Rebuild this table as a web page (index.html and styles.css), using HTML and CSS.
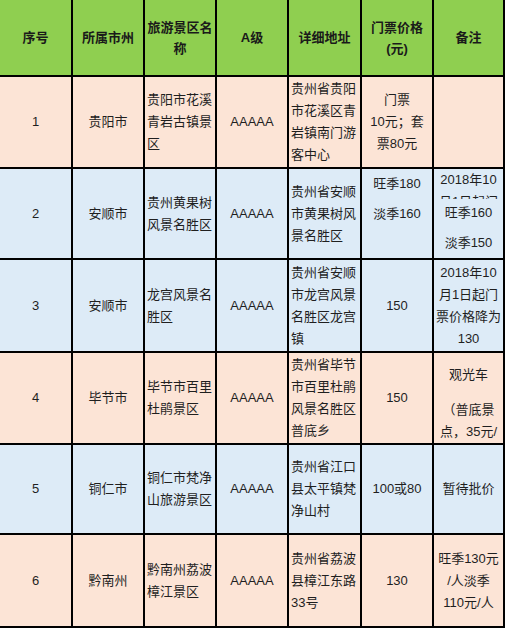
FILE: index.html
```html
<!DOCTYPE html>
<html lang="zh-CN">
<head>
<meta charset="utf-8">
<title>贵州5A景区门票</title>
<link rel="stylesheet" href="styles.css">
</head>
<body>
<div class="table">
  <div class="c h">序号</div>
  <div class="c h">所属市州</div>
  <div class="c h">旅游景区名<br>称</div>
  <div class="c h">A级</div>
  <div class="c h">详细地址</div>
  <div class="c h">门票价格<br>(元)</div>
  <div class="c h">备注</div>

  <div class="c p">1</div>
  <div class="c p">贵阳市</div>
  <div class="c p l">贵阳市花溪<br>青岩古镇景<br>区</div>
  <div class="c p">AAAAA</div>
  <div class="c p l">贵州省贵阳<br>市花溪区青<br>岩镇南门游<br>客中心</div>
  <div class="c p">门票<br>10元；套<br>票80元</div>
  <div class="c p"></div>

  <div class="c b">2</div>
  <div class="c b">安顺市</div>
  <div class="c b l">贵州黄果树<br>风景名胜区</div>
  <div class="c b">AAAAA</div>
  <div class="c b l">贵州省安顺<br>市黄果树风<br>景名胜区</div>
  <div class="c b top">
    <div class="stack price2">
      <div class="para">旺季180</div>
      <div class="para">淡季160</div>
    </div>
  </div>
  <div class="c b top">
    <div class="stack note2">
      <div class="line">2018年10</div>
      <div class="clip">月1日起门</div>
      <div class="line after-clip">旺季160</div>
      <div class="line gap">淡季150</div>
    </div>
  </div>

  <div class="c b">3</div>
  <div class="c b">安顺市</div>
  <div class="c b l">龙宫风景名<br>胜区</div>
  <div class="c b">AAAAA</div>
  <div class="c b l">贵州省安顺<br>市龙宫风景<br>名胜区龙宫<br>镇</div>
  <div class="c b">150</div>
  <div class="c b">2018年10<br>月1日起门<br>票价格降为<br>130</div>

  <div class="c p">4</div>
  <div class="c p">毕节市</div>
  <div class="c p l">毕节市百里<br>杜鹃景区</div>
  <div class="c p">AAAAA</div>
  <div class="c p l">贵州省毕节<br>市百里杜鹃<br>风景名胜区<br>普底乡</div>
  <div class="c p">150</div>
  <div class="c p top">
    <div class="stack note4">
      <div class="line">观光车</div>
      <div class="line gap2">（普底景<br>点，35元/</div>
    </div>
  </div>

  <div class="c b">5</div>
  <div class="c b">铜仁市</div>
  <div class="c b l">铜仁市梵净<br>山旅游景区</div>
  <div class="c b">AAAAA</div>
  <div class="c b l">贵州省江口<br>县太平镇梵<br>净山村</div>
  <div class="c b">100或80</div>
  <div class="c b">暂待批价</div>

  <div class="c p">6</div>
  <div class="c p">黔南州</div>
  <div class="c p l">黔南州荔波<br>樟江景区</div>
  <div class="c p">AAAAA</div>
  <div class="c p l">贵州省荔波<br>县樟江东路<br>33号</div>
  <div class="c p">130</div>
  <div class="c p">旺季130元<br>/人淡季<br>110元/人</div>
</div>
</body>
</html>
```
FILE: styles.css
```css
html, body {
  margin: 0;
  padding: 0;
  background: #ffffff;
}

.table {
  width: 505px;
  height: 628px;
  box-sizing: border-box;
  display: grid;
  grid-template-columns: 71px 70px 70px 70px 71px 70px 69px;
  grid-template-rows: 75px 90px 89px 91px 90px 88px 91px;
  gap: 2px;
  padding: 0 2px 2px 0;
  background: #000000;
  font-family: "Liberation Sans", "Noto Sans CJK SC", sans-serif;
  font-size: 13px;
  line-height: 22px;
  color: #1f1f1f;
}

.c {
  display: flex;
  align-items: center;
  justify-content: center;
  text-align: center;
  padding: 0 2px;
  overflow: hidden;
  white-space: nowrap;
}

.h {
  background: #8fcf50;
  font-weight: bold;
  line-height: 21px;
  color: #1a1a1a;
}

.p {
  background: #fce4d6;
}

.b {
  background: #ddebf7;
}

.l {
  justify-content: flex-start;
  text-align: left;
}

.top {
  align-items: flex-start;
}

.stack {
  width: 100%;
  text-align: center;
}

.price2 {
  padding-top: 4px;
}

.price2 .para + .para {
  margin-top: 8px;
}

.clip {
  height: 8px;
  overflow: hidden;
}

.after-clip {
  margin-top: 3px;
}

.gap {
  margin-top: 8px;
}

.note4 {
  padding-top: 11px;
}

.gap2 {
  margin-top: 13px;
}
```
